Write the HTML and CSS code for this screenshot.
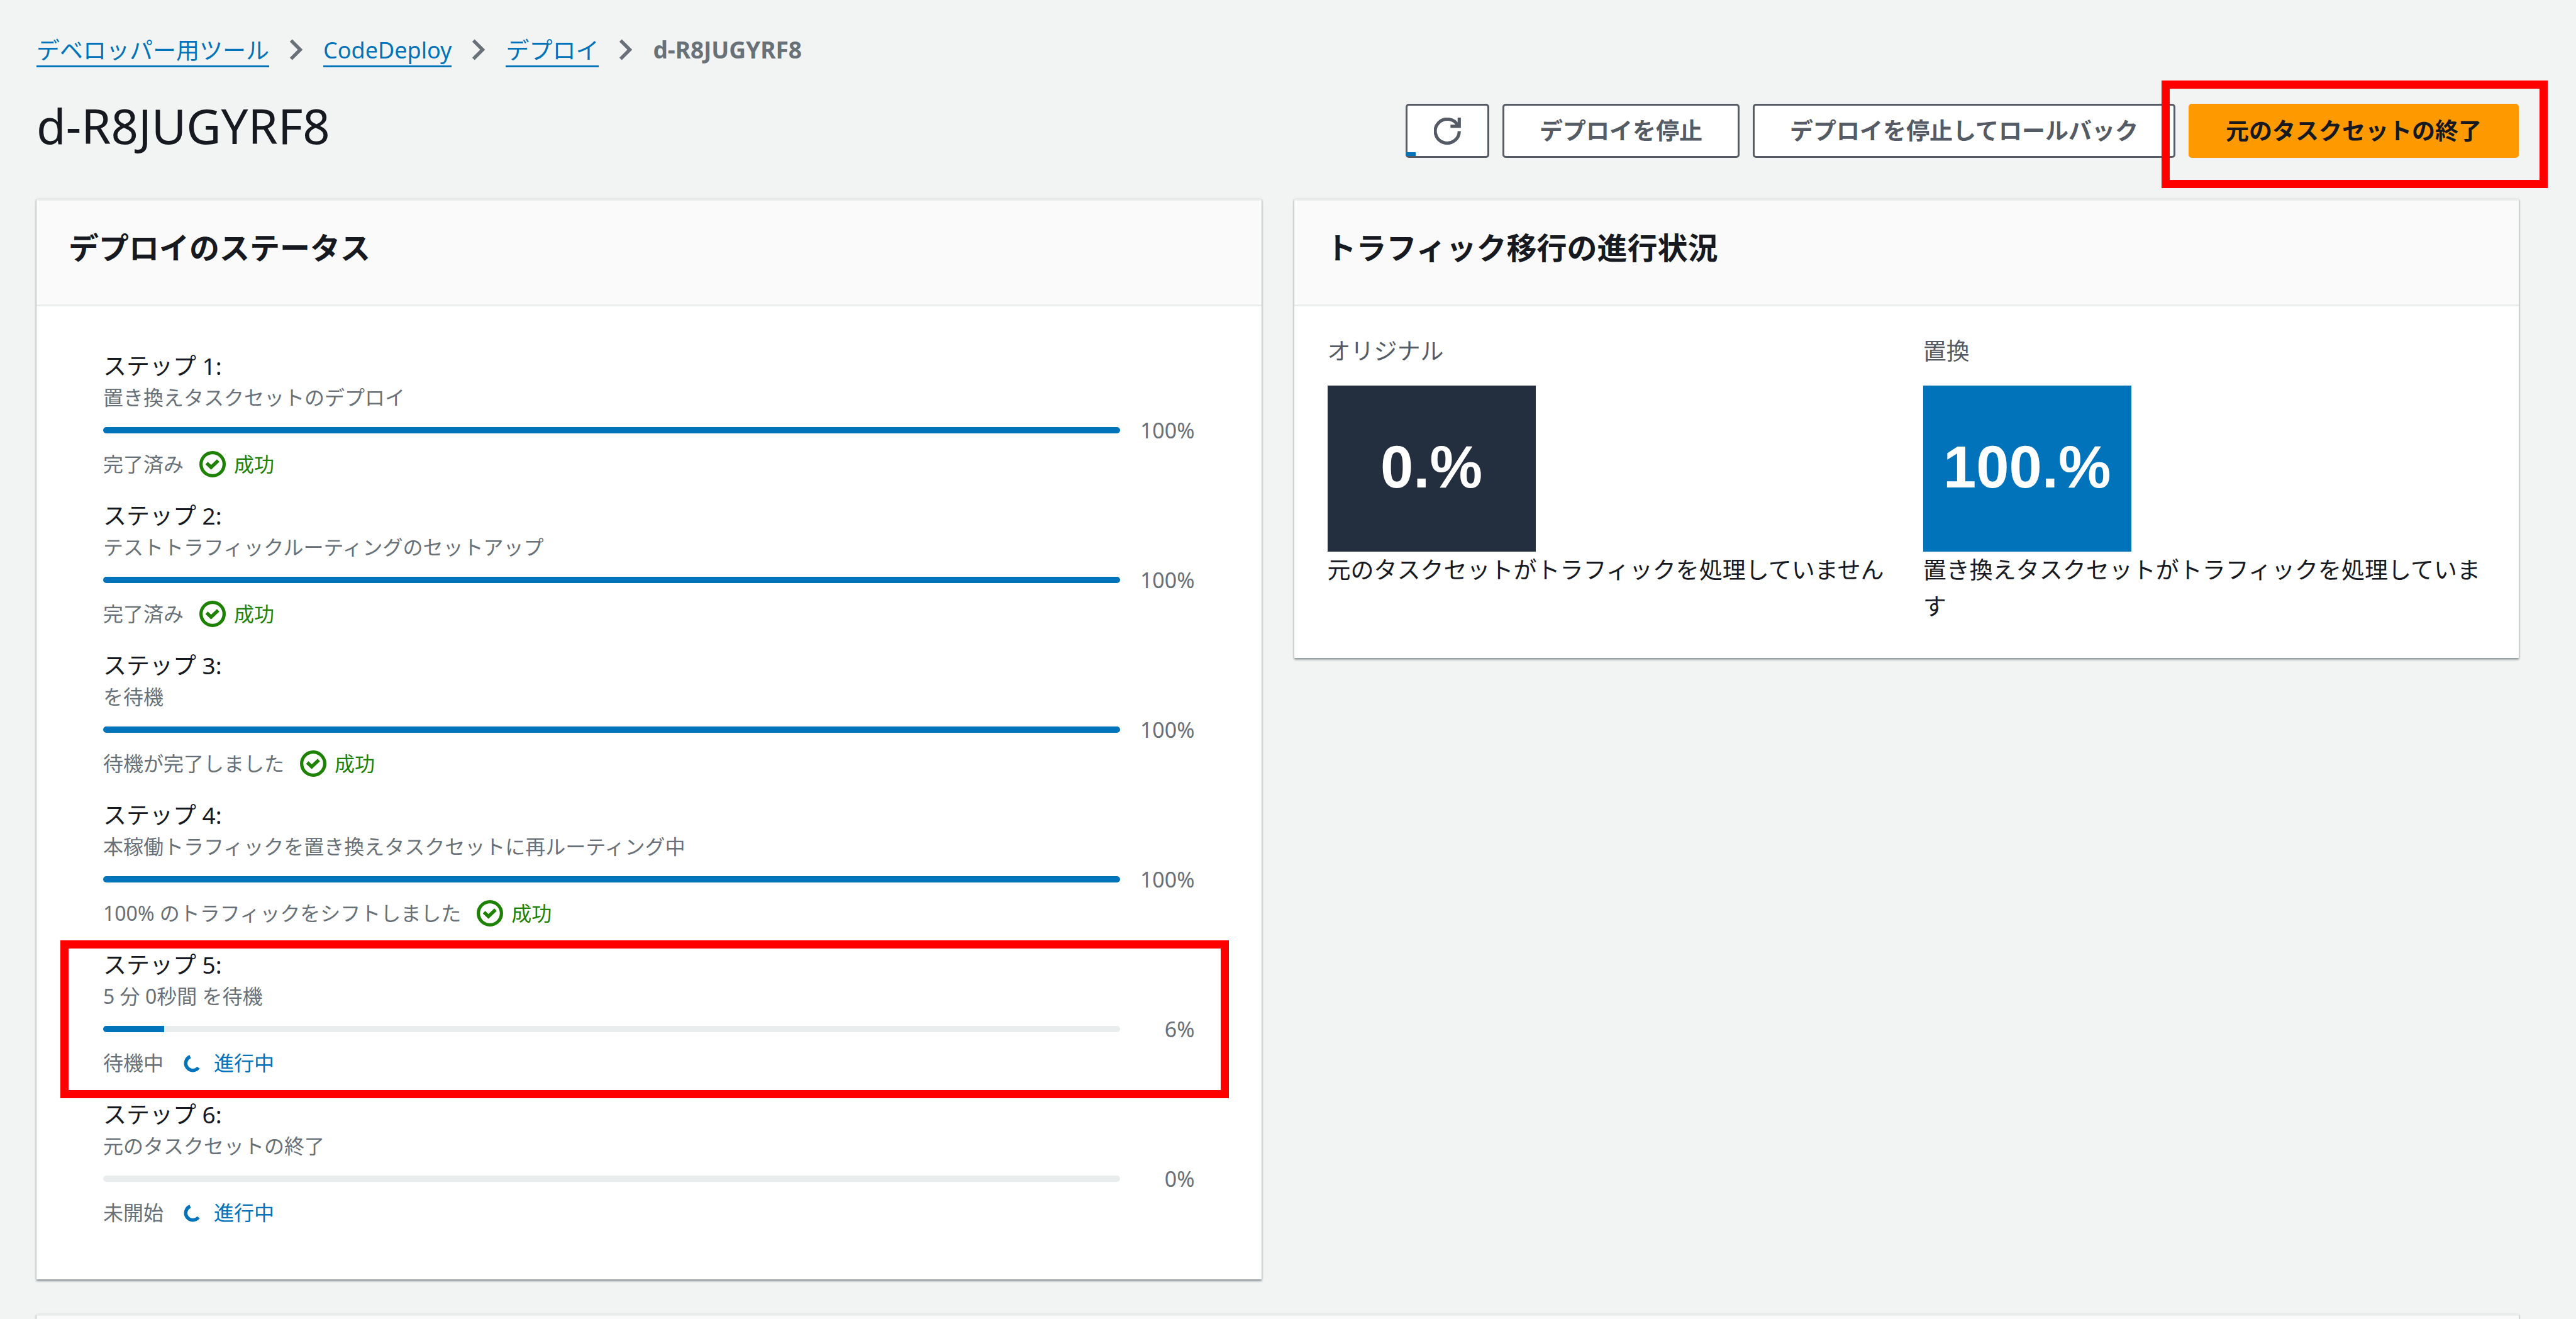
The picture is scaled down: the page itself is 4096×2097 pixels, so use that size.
FILE: index.html
```html
<!DOCTYPE html>
<html lang="ja">
<head>
<meta charset="utf-8">
<title>d-R8JUGYRF8</title>
<link rel="stylesheet" href="styles.css">
</head>
<body>
<svg class="sprite" aria-hidden="true">
  <symbol id="chevron" viewBox="0 0 24 36"><path d="M3 2l16 16L3 34" fill="none" stroke="currentColor" stroke-width="6"/></symbol>
  <symbol id="check" viewBox="0 0 16 16"><circle cx="8" cy="8" r="7" fill="none" stroke="currentColor" stroke-width="2"/><path d="M4.4 7.3L7.1 9.9 11.4 5.8" fill="none" stroke="currentColor" stroke-width="2.1"/></symbol>
  <symbol id="spinner" viewBox="0 0 42 42"><path d="M17.5 10.9A11.3 11.3 0 1 0 30.5 28.4" fill="none" stroke="currentColor" stroke-width="5.5"/></symbol>
</svg>
<main class="page">
  <nav class="crumbs" aria-label="パンくずリスト">
    <a href="#">デベロッパー用ツール</a>
    <svg class="chevron"><use href="#chevron"/></svg>
    <a class="latin" href="#">CodeDeploy</a>
    <svg class="chevron"><use href="#chevron"/></svg>
    <a href="#">デプロイ</a>
    <svg class="chevron"><use href="#chevron"/></svg>
    <span class="current">d-R8JUGYRF8</span>
  </nav>

  <header class="title-bar">
    <h1>d-R8JUGYRF8</h1>
    <div class="actions">
      <button class="btn btn-icon" type="button" aria-label="更新">
        <svg class="refresh" viewBox="0 0 16 16"><path d="M15 8A7.1 7.1 0 1 1 14.2 4.7" fill="none" stroke="currentColor" stroke-width="1.9"/><path d="M15 0V5.1H9.8" fill="none" stroke="currentColor" stroke-width="1.9"/></svg>
      </button>
      <button class="btn" type="button">デプロイを停止</button>
      <button class="btn" type="button">デプロイを停止してロールバック</button>
      <div class="marked">
        <button class="btn btn-primary" type="button">元のタスクセットの終了</button>
      </div>
    </div>
  </header>

  <div class="panels">
    <section class="panel">
      <h2>デプロイのステータス</h2>
      <ol class="steps">
        <li class="step">
          <h3>ステップ 1:</h3>
          <p class="desc">置き換えタスクセットのデプロイ</p>
          <div class="meter"><div class="track"><div class="fill" style="width:100%"></div></div><span class="value">100%</span></div>
          <p class="status">完了済み<span class="state ok"><svg class="icon"><use href="#check"/></svg>成功</span></p>
        </li>
        <li class="step">
          <h3>ステップ 2:</h3>
          <p class="desc">テストトラフィックルーティングのセットアップ</p>
          <div class="meter"><div class="track"><div class="fill" style="width:100%"></div></div><span class="value">100%</span></div>
          <p class="status">完了済み<span class="state ok"><svg class="icon"><use href="#check"/></svg>成功</span></p>
        </li>
        <li class="step">
          <h3>ステップ 3:</h3>
          <p class="desc">を待機</p>
          <div class="meter"><div class="track"><div class="fill" style="width:100%"></div></div><span class="value">100%</span></div>
          <p class="status">待機が完了しました<span class="state ok"><svg class="icon"><use href="#check"/></svg>成功</span></p>
        </li>
        <li class="step">
          <h3>ステップ 4:</h3>
          <p class="desc">本稼働トラフィックを置き換えタスクセットに再ルーティング中</p>
          <div class="meter"><div class="track"><div class="fill" style="width:100%"></div></div><span class="value">100%</span></div>
          <p class="status">100% のトラフィックをシフトしました<span class="state ok"><svg class="icon"><use href="#check"/></svg>成功</span></p>
        </li>
        <li class="step step-marked">
          <h3>ステップ 5:</h3>
          <p class="desc">5 分 0秒間 を待機</p>
          <div class="meter"><div class="track"><div class="fill" style="width:6%"></div></div><span class="value">6%</span></div>
          <p class="status">待機中<span class="state busy"><svg class="icon"><use href="#spinner"/></svg>進行中</span></p>
        </li>
        <li class="step">
          <h3>ステップ 6:</h3>
          <p class="desc">元のタスクセットの終了</p>
          <div class="meter"><div class="track"><div class="fill" style="width:0%"></div></div><span class="value">0%</span></div>
          <p class="status">未開始<span class="state busy"><svg class="icon"><use href="#spinner"/></svg>進行中</span></p>
        </li>
      </ol>
    </section>

    <section class="panel">
      <h2>トラフィック移行の進行状況</h2>
      <div class="traffic">
        <div>
          <h3 class="label">オリジナル</h3>
          <div class="tile tile-original">0.%</div>
          <p>元のタスクセットがトラフィックを処理していません</p>
        </div>
        <div>
          <h3 class="label">置換</h3>
          <div class="tile tile-replacement">100.%</div>
          <p>置き換えタスクセットがトラフィックを処理しています</p>
        </div>
      </div>
    </section>
  </div>

  <section class="panel next-panel" aria-label="詳細"></section>
</main>
</body>
</html>
```
FILE: styles.css
```css
* {
  box-sizing: border-box;
}

body {
  margin: 0;
  background: #f2f3f3;
  color: #16191f;
  font-family: "Noto Sans", "Noto Sans CJK JP", sans-serif;
  font-size: 37px;
  line-height: 58px;
}

h1, h2, h3, p, ol {
  margin: 0;
  padding: 0;
  font-weight: 400;
}

.sprite {
  position: absolute;
  width: 0;
  height: 0;
}

.page {
  display: flex;
  flex-direction: column;
  min-height: 100vh;
  padding: 50px 91px 0 58px;
}

.crumbs {
  display: flex;
  align-items: center;
  gap: 32px;
  height: 58px;
}

.crumbs a {
  height: 56px;
  border-bottom: 3px solid #0073bb;
  color: #0073bb;
  text-decoration: none;
}

.crumbs .latin {
  font-size: 36px;
}

.chevron {
  width: 22px;
  height: 34px;
  color: #687078;
}

.current {
  color: #687078;
  font-weight: 700;
}

.title-bar {
  display: flex;
  justify-content: space-between;
  align-items: flex-start;
  padding: 40px 0 64px;
}

h1 {
  font-size: 76px;
  line-height: 104px;
}

.actions {
  display: flex;
  gap: 21px;
  padding-top: 17px;
}

.btn {
  display: block;
  height: 86px;
  padding: 0 56px;
  border: 3px solid #545b64;
  border-radius: 5px;
  background: #fff;
  color: #545b64;
  font: inherit;
  font-weight: 700;
  white-space: nowrap;
}

.btn-icon {
  position: relative;
  width: 133px;
  padding: 0 41px;
}

.btn-icon::after {
  content: "";
  position: absolute;
  left: -3px;
  bottom: 0;
  width: 16px;
  height: 6px;
  background: #0073bb;
}

.refresh {
  display: block;
  width: 43px;
  height: 43px;
  margin: auto;
}

.btn-primary {
  border-color: #ff9900;
  background: #ff9900;
  color: #16191f;
}

.marked {
  position: relative;
}

.marked::after {
  content: "";
  position: absolute;
  inset: -37px -46px -48px -43px;
  border: 13px solid #ff0000;
  pointer-events: none;
}

.panels {
  display: grid;
  grid-template-columns: 1fr 1fr;
  align-items: start;
  gap: 52px;
}

.panel {
  border-top: 3px solid #eaeded;
  background: #fff;
  box-shadow: 0 3px 3px 0 rgba(0, 28, 36, 0.3), 1px 1px 3px 0 rgba(0, 28, 36, 0.15), -1px 1px 3px 0 rgba(0, 28, 36, 0.15);
}

h2 {
  padding: 45px 51px 60px;
  border-bottom: 3px solid #eaeded;
  background: #fafafa;
  font-size: 48px;
  font-weight: 700;
  line-height: 60px;
}

.steps {
  display: grid;
  gap: 32px;
  padding: 66px 106px 85px;
  list-style: none;
}

.step h3 {
  font-size: 37px;
}

.desc,
.meter,
.status {
  color: #687078;
  font-size: 32px;
  line-height: 42px;
}

.meter {
  display: flex;
  align-items: center;
  margin: 10px 0 12px;
}

.track {
  flex: 1;
  height: 10px;
  border-radius: 5px;
  overflow: hidden;
  background: #eaeded;
}

.fill {
  height: 100%;
  background: #0073bb;
}

.value {
  width: 119px;
  font-size: 34px;
  text-align: right;
}

.status {
  display: flex;
  gap: 25px;
}

.state {
  display: flex;
  gap: 13px;
}

.icon {
  width: 42px;
  height: 42px;
}

.ok {
  color: #1d8102;
}

.busy {
  color: #0073bb;
}

.step-marked {
  position: relative;
}

.step-marked::after {
  content: "";
  position: absolute;
  inset: -10px -54px -35px -68px;
  border: 13px solid #ff0000;
  pointer-events: none;
}

.traffic {
  display: grid;
  grid-template-columns: 1fr 1fr;
  gap: 53px;
  padding: 42px 53px 53px;
}

.label {
  margin-bottom: 26px;
  color: #545b64;
  font-size: 37px;
}

.tile {
  width: 331px;
  padding-bottom: 4px;
  color: #fff;
  font-family: "Liberation Sans", Arial, sans-serif;
  font-size: 94px;
  font-weight: 700;
  line-height: 260px;
  text-align: center;
}

.tile-original {
  background: #232f3e;
}

.tile-replacement {
  background: #0073bb;
}

.next-panel {
  flex: 1;
  margin-top: 55px;
  background: #fafafa;
}
```
